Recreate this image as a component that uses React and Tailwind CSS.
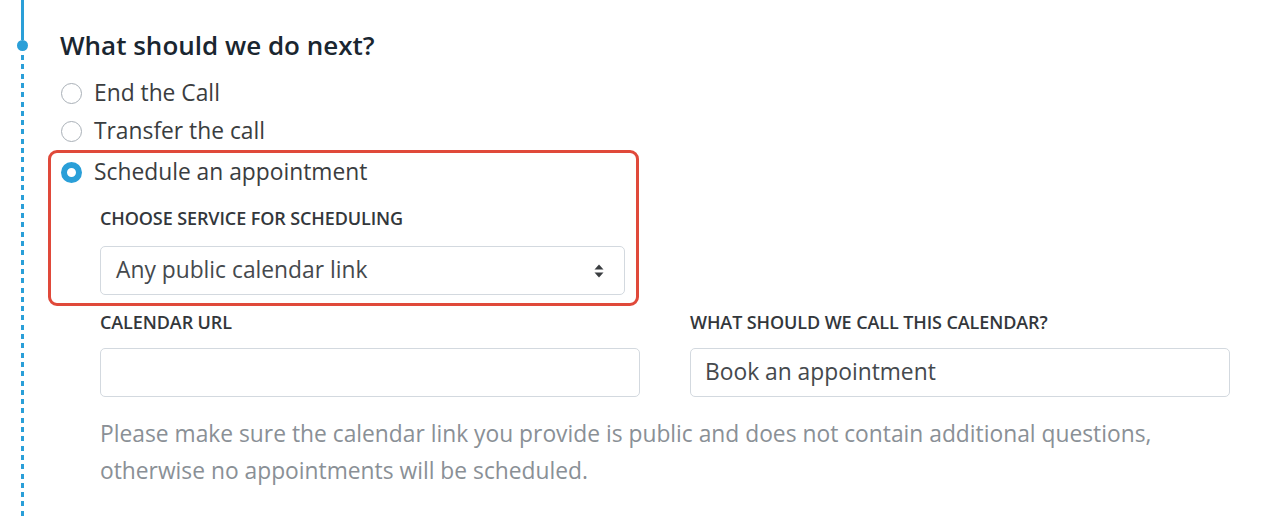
import React from 'react';

const font = { fontFamily: '"Open Sans", "Noto Sans", sans-serif' };

function Radio({ label, checked = false }) {
  return (
    <label className="flex items-center h-[38px] gap-[12px] cursor-pointer">
      {checked ? (
        <span className="w-[21px] h-[21px] rounded-full border-[6px] border-[#2a9fd8] bg-white" />
      ) : (
        <span className="w-[21px] h-[21px] rounded-full border-[1.5px] border-[#a9b0b7] bg-white" />
      )}
      <span className="text-[22.8px] leading-[30px] text-[#3a3d40]">{label}</span>
    </label>
  );
}

function Label({ children }) {
  return (
    <p className="text-[18px] leading-[20px] font-semibold uppercase text-[#33373b] tracking-[-0.1px]">
      {children}
    </p>
  );
}

export default function App() {
  return (
    <div className="flex w-[1272px] h-[521px] bg-white overflow-hidden" style={font}>

      {/* Timeline */}
      <div className="w-[48px] flex flex-col shrink-0">
        <div className="ml-[21px] w-[3px] h-[40px] bg-[#2a9fd8]" />
        <div className="ml-[17px] w-[11px] h-[11px] rounded-full bg-[#2a9fd8]" />
        <div className="ml-[21px] w-[3px] h-[462px] mt-[4px] bg-[repeating-linear-gradient(to_bottom,#2a9fd8_0_5px,transparent_5px_9.3px)]" />
      </div>

      {/* Content */}
      <div className="flex flex-col pt-[30px]">
        <h2 className="pl-[12px] text-[26px] leading-[30px] font-semibold text-[#1a2630]">
          What should we do next?
        </h2>

        <div className="pl-[13px] mt-[14px]">
          <Radio label="End the Call" />
          <Radio label="Transfer the call" />
        </div>

        {/* Highlighted option */}
        <div className="w-[591px] border-[3px] border-[#e0493a] rounded-[9px] pl-[10px] pb-[8px]">
          <Radio label="Schedule an appointment" checked />
          <div className="ml-[39px] mt-[17px]">
            <Label>Choose service for scheduling</Label>
            <div className="mt-[18px] w-[525px] h-[49px] border border-[#d3d9df] rounded-[5px] flex items-center justify-between pl-[15px] pr-[20px]">
              <span className="text-[22.8px] text-[#45494d]">Any public calendar link</span>
              <svg width="10" height="14" viewBox="0 0 10 14">
                <path d="M5 0.5L9.5 5.5H0.5Z" fill="#3a3d40" />
                <path d="M5 13.5L9.5 8.5H0.5Z" fill="#3a3d40" />
              </svg>
            </div>
          </div>
        </div>

        <div className="ml-[52px] mt-[6px]">
          <div className="grid grid-cols-[540px_540px] gap-x-[50px]">
            <div>
              <Label>Calendar URL</Label>
              <div className="mt-[16px] h-[49px] border border-[#d3d9df] rounded-[5px]" />
            </div>
            <div>
              <Label>What should we call this calendar?</Label>
              <div className="mt-[16px] h-[49px] border border-[#d3d9df] rounded-[5px] flex items-center pl-[14px]">
                <span className="text-[22.8px] text-[#45494d]">Book an appointment</span>
              </div>
            </div>
          </div>
          <p className="mt-[18px] w-[1120px] text-[22.8px] leading-[37px] text-[#8a9096]">
            Please make sure the calendar link you provide is public and does not contain additional questions,
            <br />
            otherwise no appointments will be scheduled.
          </p>
        </div>
      </div>
    </div>
  );
}
